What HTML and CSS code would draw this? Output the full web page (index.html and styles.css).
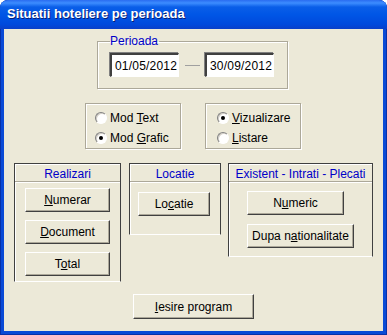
FILE: index.html
```html
<!DOCTYPE html>
<html lang="ro">
  <head>
    <meta charset="UTF-8" />
    <meta name="viewport" content="width=device-width, initial-scale=1.0" />
    <title>Situatii hoteliere pe perioada</title>
    <link rel="stylesheet" href="styles.css">
  </head>
  <body>
    <div class="window">
      <div class="titlebar">Situatii hoteliere pe perioada</div>

      <div class="client">
        <div class="row-period">
          <fieldset class="period">
            <legend>Perioada</legend>
            <div class="date-row">
              <div class="date-box">01/05/2012</div>
              <span class="dash"></span>
              <div class="date-box">30/09/2012</div>
            </div>
          </fieldset>
        </div>

        <div class="row-options">
          <div class="opt-box opt-left">
            <label class="radio"><span class="dot"></span><span>Mod <u>T</u>ext</span></label>
            <label class="radio"><span class="dot on"></span><span>Mod <u>G</u>rafic</span></label>
          </div>
          <div class="opt-box opt-right">
            <label class="radio"><span class="dot on"></span><span><u>V</u>izualizare</span></label>
            <label class="radio"><span class="dot"></span><span><u>L</u>istare</span></label>
          </div>
        </div>

        <div class="row-panels">
          <div class="panel panel-real">
            <div class="panel-head">Realizari</div>
            <div class="panel-body">
              <button class="btn btn-real"><u>N</u>umerar</button>
              <button class="btn btn-real"><u>D</u>ocument</button>
              <button class="btn btn-real">T<u>o</u>tal</button>
            </div>
          </div>
          <div class="panel panel-loc">
            <div class="panel-head">Locatie</div>
            <div class="panel-body">
              <button class="btn btn-loc">Lo<u>c</u>atie</button>
            </div>
          </div>
          <div class="panel panel-eip">
            <div class="panel-head">Existent - Intrati - Plecati</div>
            <div class="panel-body">
              <button class="btn btn-num">N<u>u</u>meric</button>
              <button class="btn btn-nat">Dupa n<u>a</u>tionalitate</button>
            </div>
          </div>
        </div>

        <div class="row-exit">
          <button class="btn btn-exit"><u>I</u>esire program</button>
        </div>
      </div>
    </div>
  </body>
</html>
```

FILE: styles.css
```css
* {
  margin: 0;
  padding: 0;
  box-sizing: border-box;
}

body {
  width: 387px;
  height: 335px;
  background: #ffffff;
  font-family: "Liberation Sans", Arial, sans-serif;
  font-size: 12px;
  color: #000;
}

.window {
  width: 387px;
  height: 335px;
  display: flex;
  flex-direction: column;
  background: #0a4ad6;
  border-radius: 8px 8px 0 0;
  padding: 0 4px 4px 4px;
  box-shadow: inset 0 0 0 1px #0831a8;
}

.titlebar {
  height: 29px;
  margin: 0 -4px;
  padding: 6px 0 0 7px;
  border-radius: 8px 8px 0 0;
  background: linear-gradient(#2a6cf0 0, #3d8dff 3px, #0a5ee8 7px, #0056e6 50%, #0049dc 85%, #0a3fc8 100%);
  color: #fff;
  font-weight: bold;
  font-size: 13px;
  text-shadow: 1px 1px 0 #0a1f74;
}

.client {
  flex: 1;
  background: #ece9d8;
  display: flex;
  flex-direction: column;
}

/* perioada */
.row-period {
  padding: 7px 0 0 93px;
}

.period {
  width: 191px;
  height: 53px;
  border: 1px solid #aca899;
  box-shadow: 1px 1px 0 #fff, inset 1px 1px 0 #fff;
  padding: 0 0 0 12px;
}

.period legend {
  color: #0000c8;
  padding: 0 1px 0 0;
  line-height: 11px;
}

.date-row {
  display: flex;
  align-items: center;
  margin-top: 6px;
}

.date-box {
  flex: none;
  width: 69px;
  height: 24px;
  background: #fff;
  border-top: 2px solid #404040;
  border-left: 2px solid #404040;
  border-right: 1px solid #fff;
  border-bottom: 1px solid #fff;
  box-shadow: -1px -1px 0 #808080;
  padding: 4px 0 0 3px;
  letter-spacing: 0.2px;
}

.dash {
  flex: none;
  width: 15px;
  height: 1px;
  background: #a0a0a0;
  margin: 0 5px 0 6px;
}

/* options */
.row-options {
  display: flex;
  padding: 14px 0 0 81px;
}

.opt-box {
  width: 96px;
  height: 46px;
  border: 1px solid #aca899;
  box-shadow: 1px 1px 0 #fff, inset 1px 1px 0 #fff;
  display: flex;
  flex-direction: column;
  gap: 6px;
  padding-top: 7px;
}

.opt-left {
  padding-left: 9px;
}

.opt-right {
  margin-left: 24px;
  padding-left: 11px;
}

.radio {
  display: flex;
  align-items: center;
  height: 14px;
  gap: 3px;
}

.dot {
  flex: none;
  width: 12px;
  height: 12px;
  border-radius: 50%;
  background: #fff;
  border: 1px solid;
  border-color: #808080 #fff #fff #808080;
  box-shadow: inset 1px 1px 0 #d4d0c8;
  display: flex;
  align-items: center;
  justify-content: center;
}

.dot.on::after {
  content: "";
  width: 4px;
  height: 4px;
  border-radius: 50%;
  background: #000;
}

/* panels */
.row-panels {
  display: flex;
  align-items: flex-start;
  padding: 14px 0 0 10px;
}

.panel {
  border-top: 1px solid #404040;
  border-left: 1px solid #404040;
  border-right: 1px solid #404040;
  border-bottom: 1px solid #fff;
  box-shadow: inset 1px 1px 0 #fff;
  display: flex;
  flex-direction: column;
}

.panel-real {
  width: 107px;
  height: 119px;
}

.panel-loc {
  width: 92px;
  height: 72px;
  margin-left: 8px;
}

.panel-eip {
  width: 145px;
  height: 94px;
  margin-left: 7px;
}

.panel-head {
  height: 18px;
  color: #0000c8;
  text-align: center;
  padding-top: 3px;
  border-bottom: 1px solid #aca899;
  box-shadow: 0 1px 0 #fff;
}

.panel-body {
  display: flex;
  flex-direction: column;
}

.btn {
  font-family: "Liberation Sans", Arial, sans-serif;
  font-size: 12px;
  color: #000;
  background: #ece9d8;
  height: 24px;
  border-top: 1px solid #fff;
  border-left: 1px solid #fff;
  border-right: 1px solid #404040;
  border-bottom: 1px solid #404040;
  box-shadow: inset -1px -1px 0 #aca899;
  cursor: pointer;
}

.panel-real .panel-body {
  gap: 8px;
  padding: 6px 0 0 10px;
}

.btn-real {
  width: 85px;
}

.panel-loc .panel-body {
  padding: 10px 0 0 8px;
}

.btn-loc {
  width: 72px;
}

.panel-eip .panel-body {
  gap: 9px;
  padding: 9px 0 0 18px;
}

.btn-num {
  width: 97px;
}

.btn-nat {
  width: 107px;
}

.row-exit {
  padding: 12px 0 0 129px;
}

.btn-exit {
  width: 121px;
  height: 25px;
}
```
